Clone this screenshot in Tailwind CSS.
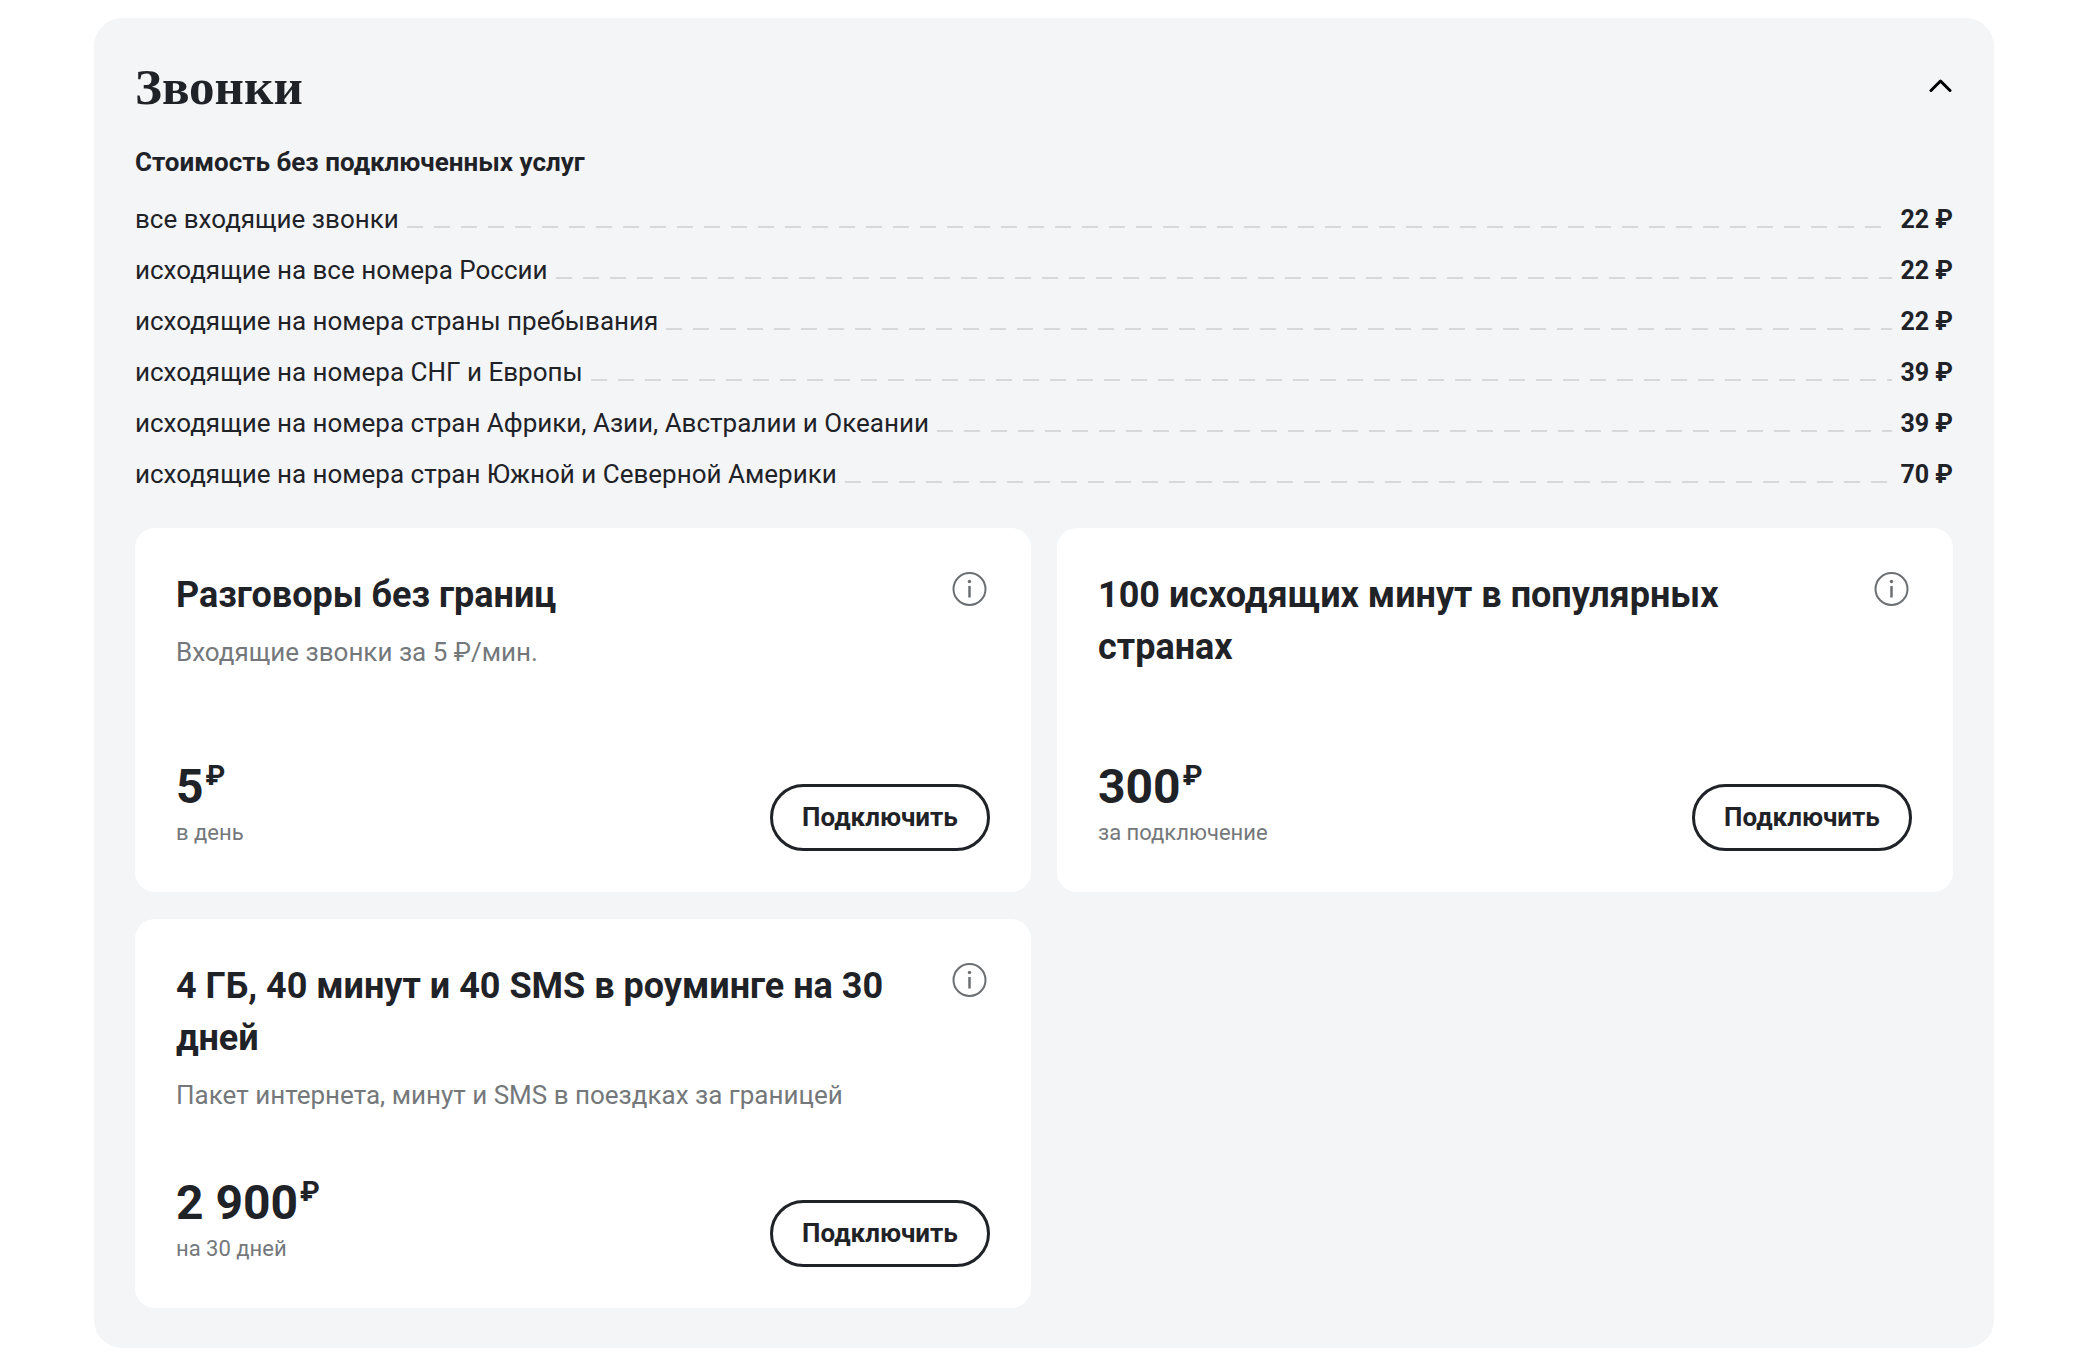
<!DOCTYPE html>
<html lang="ru">
<head>
<meta charset="utf-8">
<meta name="viewport" content="width=device-width, initial-scale=1">
<title>Звонки</title>
<script src="https://cdn.jsdelivr.net/npm/@tailwindcss/browser@4"></script>
</head>
<body class="bg-white font-['Roboto',sans-serif] text-[26px] leading-9 text-[#1f2227]">
<main class="pt-[18px] pr-[86px] pb-2 pl-[94px]">
  <section class="rounded-[28px] bg-[#f3f5f7] px-[41px] pt-[41px] pb-10" aria-labelledby="calls">
    <div class="flex items-center justify-between">
      <h2 id="calls" class="font-['Liberation_Serif',serif] text-[51px] leading-14 font-bold">Звонки</h2>
      <button type="button" aria-label="Свернуть" aria-expanded="true" class="text-black">
        <svg class="size-6" viewBox="0 0 24 24" fill="none" stroke="currentColor" stroke-width="3" stroke-linecap="round" stroke-linejoin="round"><path d="M2 15.500 11.500 6 21 15.500"/></svg>
      </button>
    </div>

    <h3 class="mt-[29px] font-bold">Стоимость без подключенных услуг</h3>
    <dl class="mt-[14px] leading-[51px]">
      <div class="flex items-baseline">
        <dt>все входящие звонки</dt>
        <dd class="ml-2 mr-2 h-0.5 grow bg-[repeating-linear-gradient(to_right,#d6d9dc_0_16px,transparent_16px_27px)]" aria-hidden="true"></dd>
        <dd class="text-[25px] font-bold">22 ₽</dd>
      </div>
      <div class="flex items-baseline">
        <dt>исходящие на все номера России</dt>
        <dd class="ml-2 mr-2 h-0.5 grow bg-[repeating-linear-gradient(to_right,#d6d9dc_0_16px,transparent_16px_27px)]" aria-hidden="true"></dd>
        <dd class="text-[25px] font-bold">22 ₽</dd>
      </div>
      <div class="flex items-baseline">
        <dt>исходящие на номера страны пребывания</dt>
        <dd class="ml-2 mr-2 h-0.5 grow bg-[repeating-linear-gradient(to_right,#d6d9dc_0_16px,transparent_16px_27px)]" aria-hidden="true"></dd>
        <dd class="text-[25px] font-bold">22 ₽</dd>
      </div>
      <div class="flex items-baseline">
        <dt>исходящие на номера СНГ и Европы</dt>
        <dd class="ml-2 mr-2 h-0.5 grow bg-[repeating-linear-gradient(to_right,#d6d9dc_0_16px,transparent_16px_27px)]" aria-hidden="true"></dd>
        <dd class="text-[25px] font-bold">39 ₽</dd>
      </div>
      <div class="flex items-baseline">
        <dt>исходящие на номера стран Африки, Азии, Австралии и Океании</dt>
        <dd class="ml-2 mr-2 h-0.5 grow bg-[repeating-linear-gradient(to_right,#d6d9dc_0_16px,transparent_16px_27px)]" aria-hidden="true"></dd>
        <dd class="text-[25px] font-bold">39 ₽</dd>
      </div>
      <div class="flex items-baseline">
        <dt>исходящие на номера стран Южной и Северной Америки</dt>
        <dd class="ml-2 mr-2 h-0.5 grow bg-[repeating-linear-gradient(to_right,#d6d9dc_0_16px,transparent_16px_27px)]" aria-hidden="true"></dd>
        <dd class="text-[25px] font-bold">70 ₽</dd>
      </div>
    </dl>

    <div class="mt-7 grid grid-cols-2 gap-x-[26px] gap-y-[27px]">
      <article class="flex min-h-[364px] flex-col justify-between rounded-[20px] bg-white p-[41px]">
        <div class="flex items-start justify-between gap-6">
          <div>
            <h4 class="text-4xl leading-13 font-bold">Разговоры без границ</h4>
            <p class="mt-[13px] text-[#74787b]">Входящие звонки за 5 ₽/мин.</p>
          </div>
          <button type="button" aria-label="Подробнее" class="shrink-0 text-[#6c6f72]">
            <svg class="size-10" viewBox="0 0 40 40" fill="none" stroke="currentColor" stroke-width="2"><circle cx="19.500" cy="20" r="16"/><path d="M19.500 17v11.500" stroke-width="2.500"/><circle cx="19.500" cy="12.500" r="1.700" fill="currentColor" stroke="none"/></svg>
          </button>
        </div>
        <div class="flex items-end justify-between pt-[62px]">
          <div>
            <p class="flex items-start text-5xl leading-14 font-bold">5<span class="ml-0.5 text-[28px] leading-[34px]">₽</span></p>
            <p class="text-[22px] leading-9 text-[#74787b]">в день</p>
          </div>
          <button type="button" class="h-[67px] w-[220px] rounded-full border-3 border-[#1f2227] pb-0.5 text-[26px] font-bold">Подключить</button>
        </div>
      </article>

      <article class="flex min-h-[364px] flex-col justify-between rounded-[20px] bg-white p-[41px]">
        <div class="flex items-start justify-between gap-6">
          <h4 class="text-4xl leading-13 font-bold">100 исходящих минут в популярных странах</h4>
          <button type="button" aria-label="Подробнее" class="shrink-0 text-[#6c6f72]">
            <svg class="size-10" viewBox="0 0 40 40" fill="none" stroke="currentColor" stroke-width="2"><circle cx="19.500" cy="20" r="16"/><path d="M19.500 17v11.500" stroke-width="2.500"/><circle cx="19.500" cy="12.500" r="1.700" fill="currentColor" stroke="none"/></svg>
          </button>
        </div>
        <div class="flex items-end justify-between pt-[62px]">
          <div>
            <p class="flex items-start text-5xl leading-14 font-bold">300<span class="ml-0.5 text-[28px] leading-[34px]">₽</span></p>
            <p class="text-[22px] leading-9 text-[#74787b]">за подключение</p>
          </div>
          <button type="button" class="h-[67px] w-[220px] rounded-full border-3 border-[#1f2227] pb-0.5 text-[26px] font-bold">Подключить</button>
        </div>
      </article>

      <article class="flex min-h-[364px] flex-col justify-between rounded-[20px] bg-white p-[41px]">
        <div class="flex items-start justify-between gap-6">
          <div>
            <h4 class="text-4xl leading-13 font-bold">4 ГБ, 40 минут и 40 SMS в роуминге на 30 дней</h4>
            <p class="mt-[13px] text-[#74787b]">Пакет интернета, минут и SMS в поездках за границей</p>
          </div>
          <button type="button" aria-label="Подробнее" class="shrink-0 text-[#6c6f72]">
            <svg class="size-10" viewBox="0 0 40 40" fill="none" stroke="currentColor" stroke-width="2"><circle cx="19.500" cy="20" r="16"/><path d="M19.500 17v11.500" stroke-width="2.500"/><circle cx="19.500" cy="12.500" r="1.700" fill="currentColor" stroke="none"/></svg>
          </button>
        </div>
        <div class="flex items-end justify-between pt-[62px]">
          <div>
            <p class="flex items-start text-5xl leading-14 font-bold">2 900<span class="ml-0.5 text-[28px] leading-[34px]">₽</span></p>
            <p class="text-[22px] leading-9 text-[#74787b]">на 30 дней</p>
          </div>
          <button type="button" class="h-[67px] w-[220px] rounded-full border-3 border-[#1f2227] pb-0.5 text-[26px] font-bold">Подключить</button>
        </div>
      </article>
    </div>
  </section>
</main>
</body>
</html>
